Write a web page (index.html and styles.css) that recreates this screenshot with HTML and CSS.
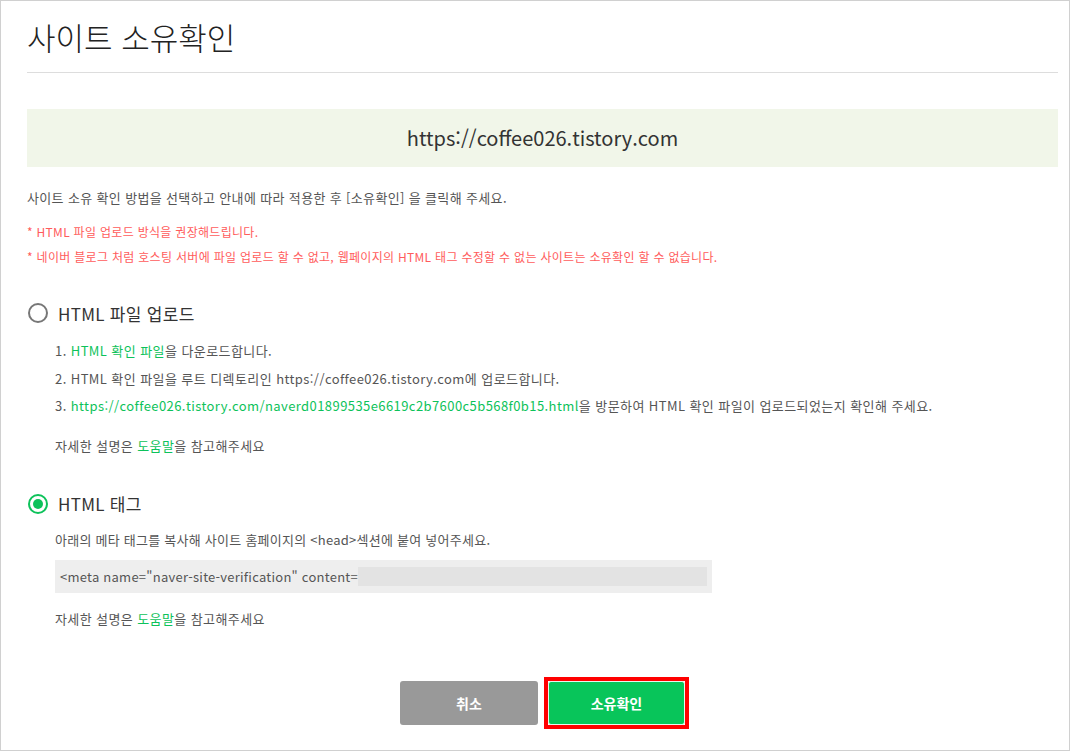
FILE: index.html
```html
<!DOCTYPE html>
<html lang="ko">
<head>
  <meta charset="UTF-8">
  <title>사이트 소유확인</title>
  <link rel="stylesheet" href="styles.css">
</head>
<body>
  <div class="page">
    <div class="header">
      <h1>사이트 소유확인</h1>
    </div>

    <div class="site-url">https://coffee026.tistory.com</div>

    <p class="desc">사이트 소유 확인 방법을 선택하고 안내에 따라 적용한 후 [소유확인] 을 클릭해 주세요.</p>

    <ul class="notice">
      <li>* HTML 파일 업로드 방식을 권장해드립니다.</li>
      <li>* 네이버 블로그 처럼 호스팅 서버에 파일 업로드 할 수 없고, 웹페이지의 HTML 태그 수정할 수 없는 사이트는 소유확인 할 수 없습니다.</li>
    </ul>

    <div class="method">
      <label class="radio">
        <span class="radio-mark"></span>
        <span class="radio-label">HTML 파일 업로드</span>
      </label>
      <ol class="steps">
        <li>1. <span class="link">HTML 확인 파일</span>을 다운로드합니다.</li>
        <li>2. HTML 확인 파일을 루트 디렉토리인 https://coffee026.tistory.com에 업로드합니다.</li>
        <li>3. <span class="link">https://coffee026.tistory.com/naverd01899535e6619c2b7600c5b568f0b15.html</span>을 방문하여 HTML 확인 파일이 업로드되었는지 확인해 주세요.</li>
      </ol>
      <p class="help">자세한 설명은 <span class="link">도움말</span>을 참고해주세요</p>
    </div>

    <div class="method method-tag">
      <label class="radio checked">
        <span class="radio-mark"></span>
        <span class="radio-label">HTML 태그</span>
      </label>
      <p class="meta-desc">아래의 메타 태그를 복사해 사이트 홈페이지의 &lt;head&gt;섹션에 붙여 넣어주세요.</p>
      <div class="meta-box">
        <span class="meta-code">&lt;meta name="naver-site-verification" content=</span>
        <span class="meta-hidden"></span>
      </div>
      <p class="help help-tag">자세한 설명은 <span class="link">도움말</span>을 참고해주세요</p>
    </div>

    <div class="buttons">
      <button class="btn btn-cancel">취소</button>
      <span class="highlight">
        <button class="btn btn-ok">소유확인</button>
      </span>
    </div>
  </div>
</body>
</html>
```

FILE: styles.css
```css
body {
  margin: 0;
  font-family: "Noto Sans CJK KR", "Noto Sans", sans-serif;
  color: #555;
  background: #fff;
}

.page {
  width: 1070px;
  height: 751px;
  box-sizing: border-box;
  border: 1px solid #d0d0d0;
  padding: 0 11px 0 26px;
}

.header {
  padding: 16px 0 15px;
  border-bottom: 1px solid #dddddd;
}

h1 {
  margin: 0;
  font-size: 31px;
  line-height: 40px;
  font-weight: 300;
  color: #222;
}

.site-url {
  margin-top: 36px;
  height: 58px;
  line-height: 58px;
  background: #f1f6e9;
  text-align: center;
  font-size: 20px;
  color: #333;
}

.desc {
  margin: 21px 0 0;
  font-size: 13px;
  line-height: 20px;
  letter-spacing: 0.35px;
  color: #555;
}

.notice {
  list-style: none;
  margin: 11px 0 0;
  padding: 0;
  font-size: 12px;
  line-height: 25px;
  letter-spacing: 0.3px;
  color: #ff5c5c;
}

.method {
  margin-top: 32px;
}

.radio {
  display: flex;
  align-items: center;
  gap: 10px;
  height: 24px;
}

.radio-mark {
  width: 16px;
  height: 16px;
  border: 2px solid #777;
  border-radius: 50%;
  display: flex;
  align-items: center;
  justify-content: center;
  margin-left: 1px;
}

.radio.checked .radio-mark {
  border-color: #0dc25a;
}

.radio.checked .radio-mark::after {
  content: "";
  width: 10px;
  height: 10px;
  border-radius: 50%;
  background: #0dc25a;
}

.radio-label {
  font-size: 17px;
  letter-spacing: 0.3px;
  color: #333;
}

.steps {
  list-style: none;
  margin: 12px 0 0;
  padding: 0 0 0 28px;
  font-size: 13px;
  line-height: 27.5px;
  letter-spacing: 0.42px;
}

.help {
  margin: 16px 0 0 28px;
  font-size: 13px;
  line-height: 20px;
  letter-spacing: 0.4px;
}

.link {
  color: #0dc25a;
}

.method-tag {
  margin-top: 36px;
}

.meta-desc {
  margin: 14px 0 0 28px;
  font-size: 13px;
  line-height: 20px;
  letter-spacing: 0.25px;
}

.meta-box {
  margin: 10px 0 0 28px;
  width: 657px;
  height: 33px;
  background: #eeeeee;
  display: flex;
  align-items: center;
  padding-left: 5px;
  box-sizing: border-box;
  font-size: 13px;
  letter-spacing: 0.25px;
  color: #555;
}

.meta-hidden {
  flex: 0 0 349px;
  height: 19px;
  background: #e3e3e3;
}

.help-tag {
  margin-top: 16px;
}

.buttons {
  display: flex;
  justify-content: center;
  align-items: flex-start;
  gap: 10px;
  margin-top: 52px;
}

.btn {
  width: 138px;
  height: 44px;
  border: none;
  border-radius: 3px;
  font-family: inherit;
  font-size: 14px;
  font-weight: bold;
  color: #fff;
  cursor: pointer;
}

.btn-cancel {
  background: #999999;
}

.highlight {
  display: block;
  margin: -4px;
  border: 4px solid #ff0000;
}

.btn-ok {
  display: block;
  width: 137px;
  background: #08c55a;
  border: 1px solid #e8f8ee;
}
```
